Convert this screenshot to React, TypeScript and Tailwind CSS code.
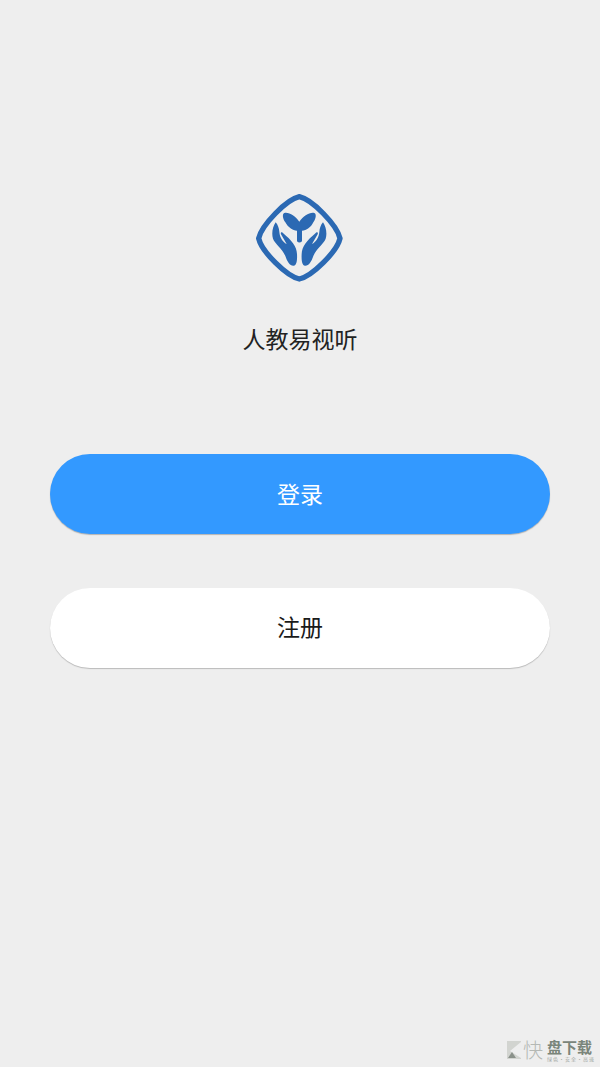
const cjk = "font-['Noto_Sans_CJK_SC','Noto_Sans',sans-serif]";

const handPath =
  "M107 127 C98 140 94 160 99 176 C105 192 126 204 136 228 C142 246 150 258 161 257 C170 256 172 240 171 222 C170 198 156 182 128 158 C124 155 121 158 123 163 L140 192 C128 186 119 172 118 155 C117 145 114 135 107 127 Z";

const Logo = () => (
  <svg viewBox="0 0 360 330" className="h-[110px] w-[120px]">
    <path
      d="M178 50 C216 58 291 135 300 175 C291 215 216 289 178 297 C140 289 65 215 56 175 C65 135 140 58 178 50 Z"
      fill="none"
      stroke="#2b69b3"
      strokeWidth="16"
      strokeLinejoin="round"
    />
    <path
      d="M178 125 C165 108 148 96 133 99 C126 102 128 116 136 127 C144 142 158 152 171 152 L171 184 Q178 191 186 184 L186 152 C199 152 213 142 220 127 C228 116 230 102 223 99 C208 96 191 108 178 125 Z"
      fill="#2b69b3"
    />
    <path d={handPath} fill="#2b69b3" />
    <path d={handPath} fill="#2b69b3" transform="translate(356 0) scale(-1 1)" />
  </svg>
);

const Watermark = () => (
  <div className={`absolute top-[1040px] left-[507px] flex items-start ${cjk}`}>
    <svg viewBox="0 0 14 18" className="mt-[1px] h-[18px] w-[14px]">
      <rect width="14" height="18" fill="#d2d4d0" />
      <path d="M14 1 L3 10 L14 17 Z" fill="#eeeeee" />
      <path d="M1 17 L5 11 L9 17 Z" fill="#8a918a" />
    </svg>
    <span className="ml-[2px] text-[20px] leading-[20px] font-light text-[#b4b8b4]">快</span>
    <div className="ml-[4px] flex flex-col">
      <span className="text-[15px] leading-[13px] font-bold whitespace-nowrap text-[#7a857a]">盘下载</span>
      <span className="mt-[3px] text-[5px] leading-[5px] tracking-[1px] whitespace-nowrap text-[#a4a9a4]">绿色·安全·高速</span>
    </div>
  </div>
);

export default function App() {
  return (
    <div className={`relative flex h-[1067px] w-[600px] flex-col items-center overflow-hidden bg-[#eeeeee] pt-[180px] ${cjk}`}>
      <Logo />
      <div className="mt-[30px] mb-[1px] text-[23px] leading-[36px] text-[#222222]">人教易视听</div>

      <button className="mt-[97px] h-[80px] w-[500px] rounded-[40px] bg-[#3399ff] pb-[1px] text-[23px] text-white shadow-[0_1px_1px_rgba(0,0,0,0.25)]">
        登录
      </button>
      <button className="mt-[54px] h-[80px] w-[500px] rounded-[40px] bg-white pb-[3px] text-[23px] text-[#1a1a1a] shadow-[0_1px_1px_rgba(0,0,0,0.22)]">
        注册
      </button>

      <Watermark />
    </div>
  );
}
